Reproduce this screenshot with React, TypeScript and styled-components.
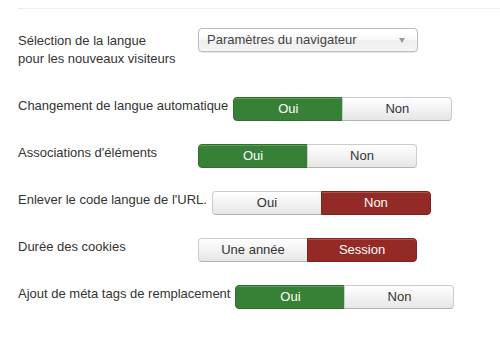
import * as React from 'react'
import styled, { createGlobalStyle, css } from 'styled-components'

const GlobalStyle = createGlobalStyle`
  body {
    margin: 0;
    background: #fff;
    font-family: "Liberation Sans", Arial, Helvetica, sans-serif;
    font-size: 13px;
    color: #333;
  }
`

const Page = styled.div`
  padding: 8px 0 0 18px;
`

const Form = styled.div`
  border-top: 1px solid #eee;
  padding-top: 19px;
`

const Group = styled.div`
  display: flex;
  align-items: flex-start;
  margin-bottom: 23px;
`

const Label = styled.div<{ $tall?: boolean }>`
  flex: 0 0 auto;
  min-width: 180px;
  box-sizing: border-box;
  padding-right: 5px;
  line-height: 18px;
  ${(p) =>
    p.$tall &&
    css`
      padding-top: 4px;
      padding-bottom: 6px;
    `}
`

const Select = styled.div`
  position: relative;
  width: 220px;
  height: 24px;
  box-sizing: border-box;
  border: 1px solid #bbb;
  border-radius: 4px;
  background: linear-gradient(#fff 20%, #f6f6f6 50%, #eee 52%, #f4f4f4 100%);
  padding-left: 8px;
  line-height: 22px;
  color: #444;
  box-shadow: 0 0 3px #fff inset, 0 1px 1px rgba(0, 0, 0, 0.1);
`

const Arrow = styled.span`
  position: absolute;
  right: 12px;
  top: 9px;
  width: 0;
  height: 0;
  border-left: 3.5px solid transparent;
  border-right: 3.5px solid transparent;
  border-top: 5px solid #999;
`

const BtnGroup = styled.div`
  display: flex;
  margin-top: 0;
`

type Tone = 'success' | 'danger' | 'off'

const Btn = styled.div<{ $tone: Tone }>`
  width: 110px;
  height: 24px;
  box-sizing: border-box;
  display: flex;
  align-items: center;
  justify-content: center;
  font-size: 13px;
  line-height: 18px;
  border: 1px solid #ccc;
  border-bottom-color: #b3b3b3;
  color: #333;
  background: linear-gradient(#fff, #e6e6e6);
  box-shadow: inset 0 1px 0 rgba(255, 255, 255, 0.2);

  &:first-child {
    border-radius: 4px 0 0 4px;
  }
  &:last-child {
    border-radius: 0 4px 4px 0;
    margin-left: -1px;
  }

  ${(p) =>
    p.$tone === 'success' &&
    css`
      background: #378137;
      border-color: #2f6e2f;
      color: #fff;
    `}
  ${(p) =>
    p.$tone === 'danger' &&
    css`
      background: #942a25;
      border-color: #7e2420;
      color: #fff;
    `}
`

interface ToggleProps {
  yes: string
  no: string
  value: 'yes' | 'no'
  noTone?: Tone
}

const Toggle: React.FC<ToggleProps> = ({ yes, no, value }) => (
  <BtnGroup>
    <Btn $tone={value === 'yes' ? 'success' : 'off'}>{yes}</Btn>
    <Btn $tone={value === 'no' ? 'danger' : 'off'}>{no}</Btn>
  </BtnGroup>
)

const rows: { label: string; yes: string; no: string; value: 'yes' | 'no' }[] = [
  { label: 'Changement de langue automatique', yes: 'Oui', no: 'Non', value: 'yes' },
  { label: "Associations d'éléments", yes: 'Oui', no: 'Non', value: 'yes' },
  { label: "Enlever le code langue de l'URL.", yes: 'Oui', no: 'Non', value: 'no' },
  { label: 'Durée des cookies', yes: 'Une année', no: 'Session', value: 'no' },
  { label: 'Ajout de méta tags de remplacement', yes: 'Oui', no: 'Non', value: 'yes' },
]

export default function App() {
  return (
    <Page>
      <GlobalStyle />
      <Form>
        <Group>
          <Label $tall>
            Sélection de la langue
            <br />
            pour les nouveaux visiteurs
          </Label>
          <Select>
            Paramètres du navigateur
            <Arrow />
          </Select>
        </Group>
        {rows.map((r) => (
          <Group key={r.label}>
            <Label>{r.label}</Label>
            <Toggle yes={r.yes} no={r.no} value={r.value} />
          </Group>
        ))}
      </Form>
    </Page>
  )
}
